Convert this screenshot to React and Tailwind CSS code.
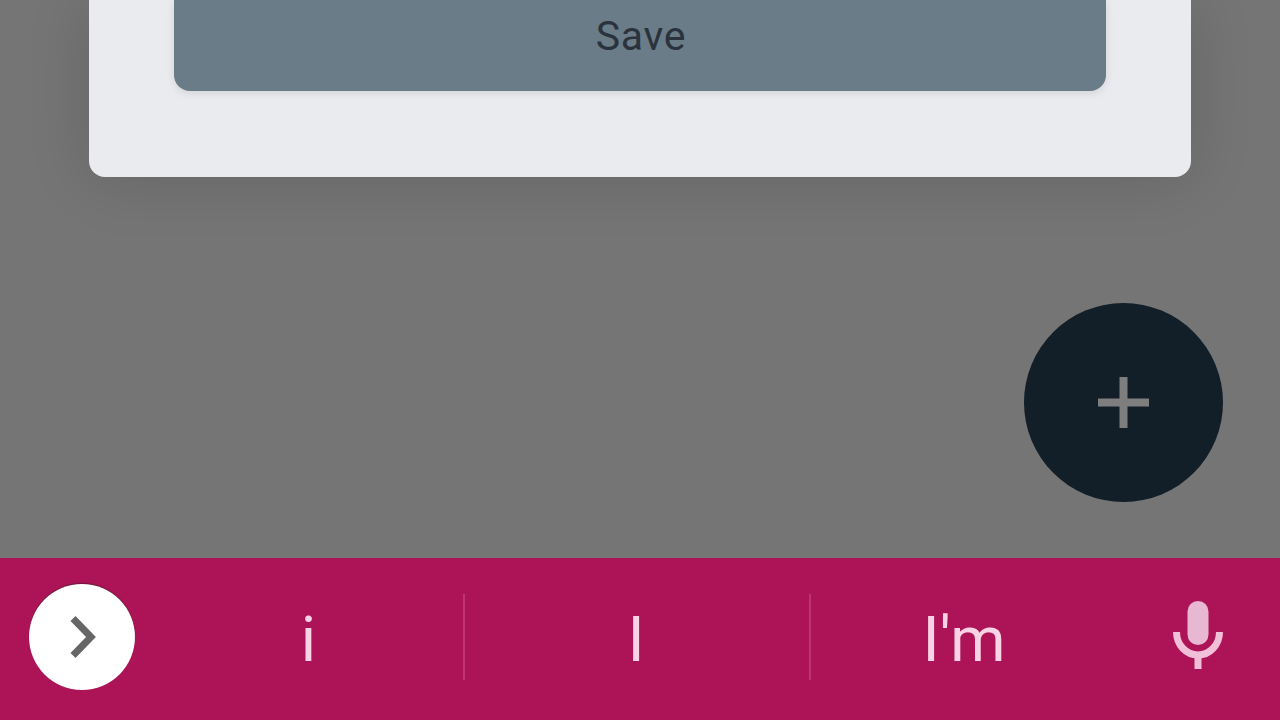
export default function App() {
  return (
    <div className="h-screen w-full flex flex-col overflow-hidden font-['Roboto',sans-serif]">
      {/* dimmed page behind the dialog */}
      <div className="h-[558px] shrink-0 bg-[#757575] flex flex-col">
        <div className="h-[177px] shrink-0 mx-[89px] px-[85px] bg-[#eaebef] rounded-b-[16px] shadow-[0_2px_64px_rgba(0,0,0,0.14)]">
          <div className="h-[91px] pb-[18px] pl-[2px] bg-[#6a7c88] rounded-b-[16px] shadow-[0_2px_8px_rgba(0,0,0,0.1)] flex items-center justify-center text-[41px] tracking-[0.7px] text-[#2a333d]">
            Save
          </div>
        </div>
        <div className="w-[199px] h-[199px] mt-[126px] ml-[1024px] rounded-full bg-[#121e28] flex items-center justify-center">
          <svg width="51" height="51" viewBox="0 0 51 51" fill="#7e7e7e">
            <rect x="21.5" y="0" width="8" height="51" />
            <rect x="0" y="21.5" width="51" height="8" />
          </svg>
        </div>
      </div>
      {/* keyboard suggestion strip */}
      <div className="h-[162px] shrink-0 pb-[4px] bg-[#ad1457] flex items-center text-[#f8d3e5] text-[63px]">
        <div className="w-[152px] shrink-0 pl-[29px]">
          <div className="w-[106px] h-[106px] rounded-full bg-white flex items-center justify-center shadow-[0_-1px_1px_rgba(60,30,40,0.6)]">
            <svg width="26" height="42" viewBox="0 0 26 42" fill="none" stroke="#666666" strokeWidth="7" className="ml-[1px]">
              <path d="M3 2.5 L21 21 L3 39.5" />
            </svg>
          </div>
        </div>
        <div className="w-[311px] shrink-0 pt-[7px] pl-[2px] flex justify-center">i</div>
        <div className="w-[2px] h-[86px] shrink-0 bg-[#bd3570]" />
        <div className="w-[344px] shrink-0 pt-[7px] pr-[2px] flex justify-center">I</div>
        <div className="w-[2px] h-[86px] shrink-0 bg-[#bd3570]" />
        <div className="w-[306px] shrink-0 pt-[7px] flex justify-center">I'm</div>
        <div className="flex-1 flex justify-end pr-[57px] pb-[4px]">
          <svg width="50" height="68" viewBox="0 0 50 68" fill="none">
            <rect x="14.5" y="0" width="21" height="44" rx="10.5" fill="#e8b8d2" />
            <path d="M3.5 31 a21.5 23 0 0 0 43 0" stroke="#f2bfd8" strokeWidth="7" />
            <rect x="21.5" y="53" width="7" height="15" fill="#f2bfd8" />
          </svg>
        </div>
      </div>
    </div>
  );
}
